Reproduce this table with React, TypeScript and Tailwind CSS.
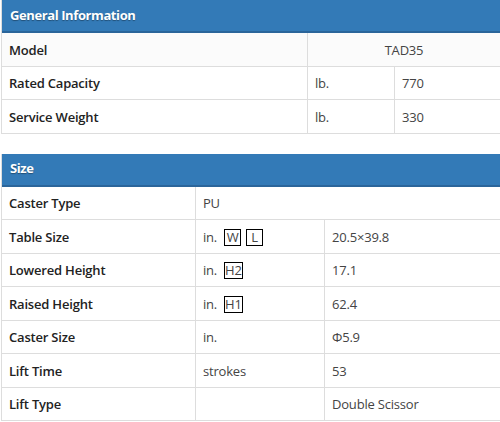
import React from 'react';

const Box = ({ children, wide }: { children: React.ReactNode; wide?: boolean }) => (
  <span
    className={
      'inline-flex items-start justify-center h-[17px] border border-[#000] leading-[15px] text-[13px] text-[#444] ' +
      (wide ? 'w-[17px]' : 'px-0')
    }
  >
    {children}
  </span>
);

type Row = { label: string; unit?: React.ReactNode; value: string };

const general: Row[] = [
  { label: 'Rated Capacity', unit: 'lb.', value: '770' },
  { label: 'Service Weight', unit: 'lb.', value: '330' },
];

const size: Row[] = [
  { label: 'Caster Type', value: 'PU' },
  {
    label: 'Table Size',
    unit: (
      <span className="flex items-center gap-[5px]">
        <span className="mr-[2px]">in.</span>
        <Box wide>W</Box>
        <Box wide>L</Box>
      </span>
    ),
    value: '20.5×39.8',
  },
  {
    label: 'Lowered Height',
    unit: (
      <span className="flex items-center">
        <span className="mr-[7px]">in.</span>
        <Box>H2</Box>
      </span>
    ),
    value: '17.1',
  },
  {
    label: 'Raised Height',
    unit: (
      <span className="flex items-center">
        <span className="mr-[7px]">in.</span>
        <Box>H1</Box>
      </span>
    ),
    value: '62.4',
  },
  { label: 'Caster Size', unit: 'in.', value: 'Φ5.9' },
  { label: 'Lift Time', unit: 'strokes', value: '53' },
  { label: 'Lift Type', unit: '', value: 'Double Scissor' },
];

const Header = ({ title }: { title: string }) => (
  <div className="h-[33px] bg-[#337ab7] border-b-2 border-[#2b659a] flex items-center px-[8px]">
    <span className="text-white font-bold text-[13px] tracking-[-0.4px] [text-shadow:0_1px_1px_rgba(0,0,0,0.35)]">{title}</span>
  </div>
);

const label = 'flex items-center pt-[2px] px-[7px] font-semibold text-[#222] tracking-[-0.2px] border-b border-[#ddd]';
const cell = 'flex items-center pt-[2px] px-[7px] text-[#444] tracking-[-0.2px] border-b border-l border-[#ddd]';

export default function App() {
  return (
    <div
      className="w-[500px] h-[422px] bg-white text-[13px] overflow-hidden"
      style={{ fontFamily: '"Open Sans", "Noto Sans", sans-serif' }}
    >
      <div className="ml-[1px] border-l border-[#ddd]">
        <Header title="General Information" />
        <div className="grid grid-cols-[305px_87px_1fr] auto-rows-[33.5px]">
          <div className={label + ' bg-[#fbfbfb]'}>Model</div>
          <div className={cell + ' col-span-2 justify-center bg-[#fbfbfb]'}>TAD35</div>
          {general.map(r => (
            <React.Fragment key={r.label}>
              <div className={label}>{r.label}</div>
              <div className={cell}>{r.unit}</div>
              <div className={cell}>{r.value}</div>
            </React.Fragment>
          ))}
        </div>
      </div>

      <div className="ml-[1px] mt-[20px] border-l border-[#ddd]">
        <Header title="Size" />
        <div className="grid grid-cols-[193px_129px_1fr] auto-rows-[33.5px]">
          {size.map(r => (
            <React.Fragment key={r.label}>
              <div className={label}>{r.label}</div>
              {r.unit === undefined ? (
                <div className={cell + ' col-span-2'}>{r.value}</div>
              ) : (
                <>
                  <div className={cell}>{r.unit}</div>
                  <div className={cell}>{r.value}</div>
                </>
              )}
            </React.Fragment>
          ))}
        </div>
      </div>
    </div>
  );
}
